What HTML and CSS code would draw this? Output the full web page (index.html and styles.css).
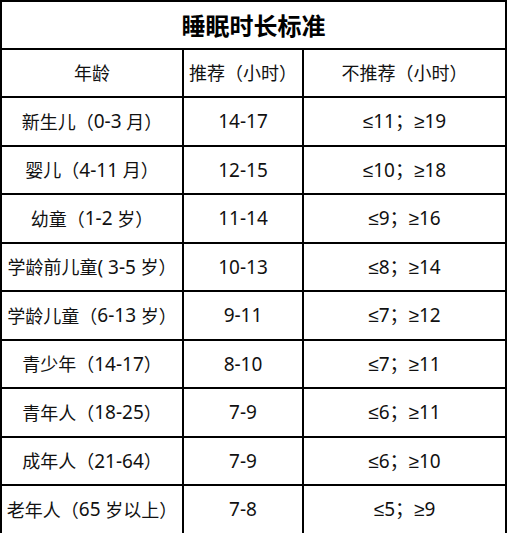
FILE: index.html
```html
<!DOCTYPE html>
<html lang="zh-CN">
<head>
<meta charset="utf-8">
<title>睡眠时长标准</title>
<link rel="stylesheet" href="styles.css">
</head>
<body>
<div class="sheet">
  <div class="cell title">睡眠时长标准</div>
  <div class="cell">年龄</div>
  <div class="cell">推荐（小时）</div>
  <div class="cell">不推荐（小时）</div>

  <div class="cell">新生儿（<span class="n">0-3</span> 月）</div>
  <div class="cell num">14-17</div>
  <div class="cell num">≤11；≥19</div>

  <div class="cell">婴儿（<span class="n">4-11</span> 月）</div>
  <div class="cell num">12-15</div>
  <div class="cell num">≤10；≥18</div>

  <div class="cell">幼童（<span class="n">1-2</span> 岁）</div>
  <div class="cell num">11-14</div>
  <div class="cell num">≤9；≥16</div>

  <div class="cell">学龄前儿童<span class="n">( 3-5</span> 岁）</div>
  <div class="cell num">10-13</div>
  <div class="cell num">≤8；≥14</div>

  <div class="cell">学龄儿童（<span class="n">6-13</span> 岁）</div>
  <div class="cell num">9-11</div>
  <div class="cell num">≤7；≥12</div>

  <div class="cell">青少年（<span class="n">14-17</span>）</div>
  <div class="cell num">8-10</div>
  <div class="cell num">≤7；≥11</div>

  <div class="cell">青年人（<span class="n">18-25</span>）</div>
  <div class="cell num">7-9</div>
  <div class="cell num">≤6；≥11</div>

  <div class="cell">成年人（<span class="n">21-64</span>）</div>
  <div class="cell num">7-9</div>
  <div class="cell num">≤6；≥10</div>

  <div class="cell">老年人（<span class="n">65</span> 岁以上）</div>
  <div class="cell num">7-8</div>
  <div class="cell num">≤5；≥9</div>
</div>
</body>
</html>
```

FILE: styles.css
```css
html, body {
  margin: 0;
  padding: 0;
  background: #ffffff;
}

.sheet {
  display: grid;
  grid-template-columns: 180px 118px 201px;
  grid-template-rows: 45.5px repeat(10, 46.5px);
  gap: 2px;
  padding: 2px 2px 2px 2px;
  width: max-content;
  background: #000000;
  font-family: "Noto Sans", "Liberation Sans", "Noto Sans CJK SC", sans-serif;
  font-size: 18px;
  color: #111111;
}

.cell {
  background: #ffffff;
  display: flex;
  align-items: center;
  justify-content: center;
  white-space: pre;
  line-height: 1;
  padding-top: 1px;
}

.num,
.n {
  font-size: 19px;
}

.title {
  grid-column: 1 / 4;
  font-size: 24px;
  font-weight: 700;
  color: #000000;
  padding-top: 3px;
}
```
